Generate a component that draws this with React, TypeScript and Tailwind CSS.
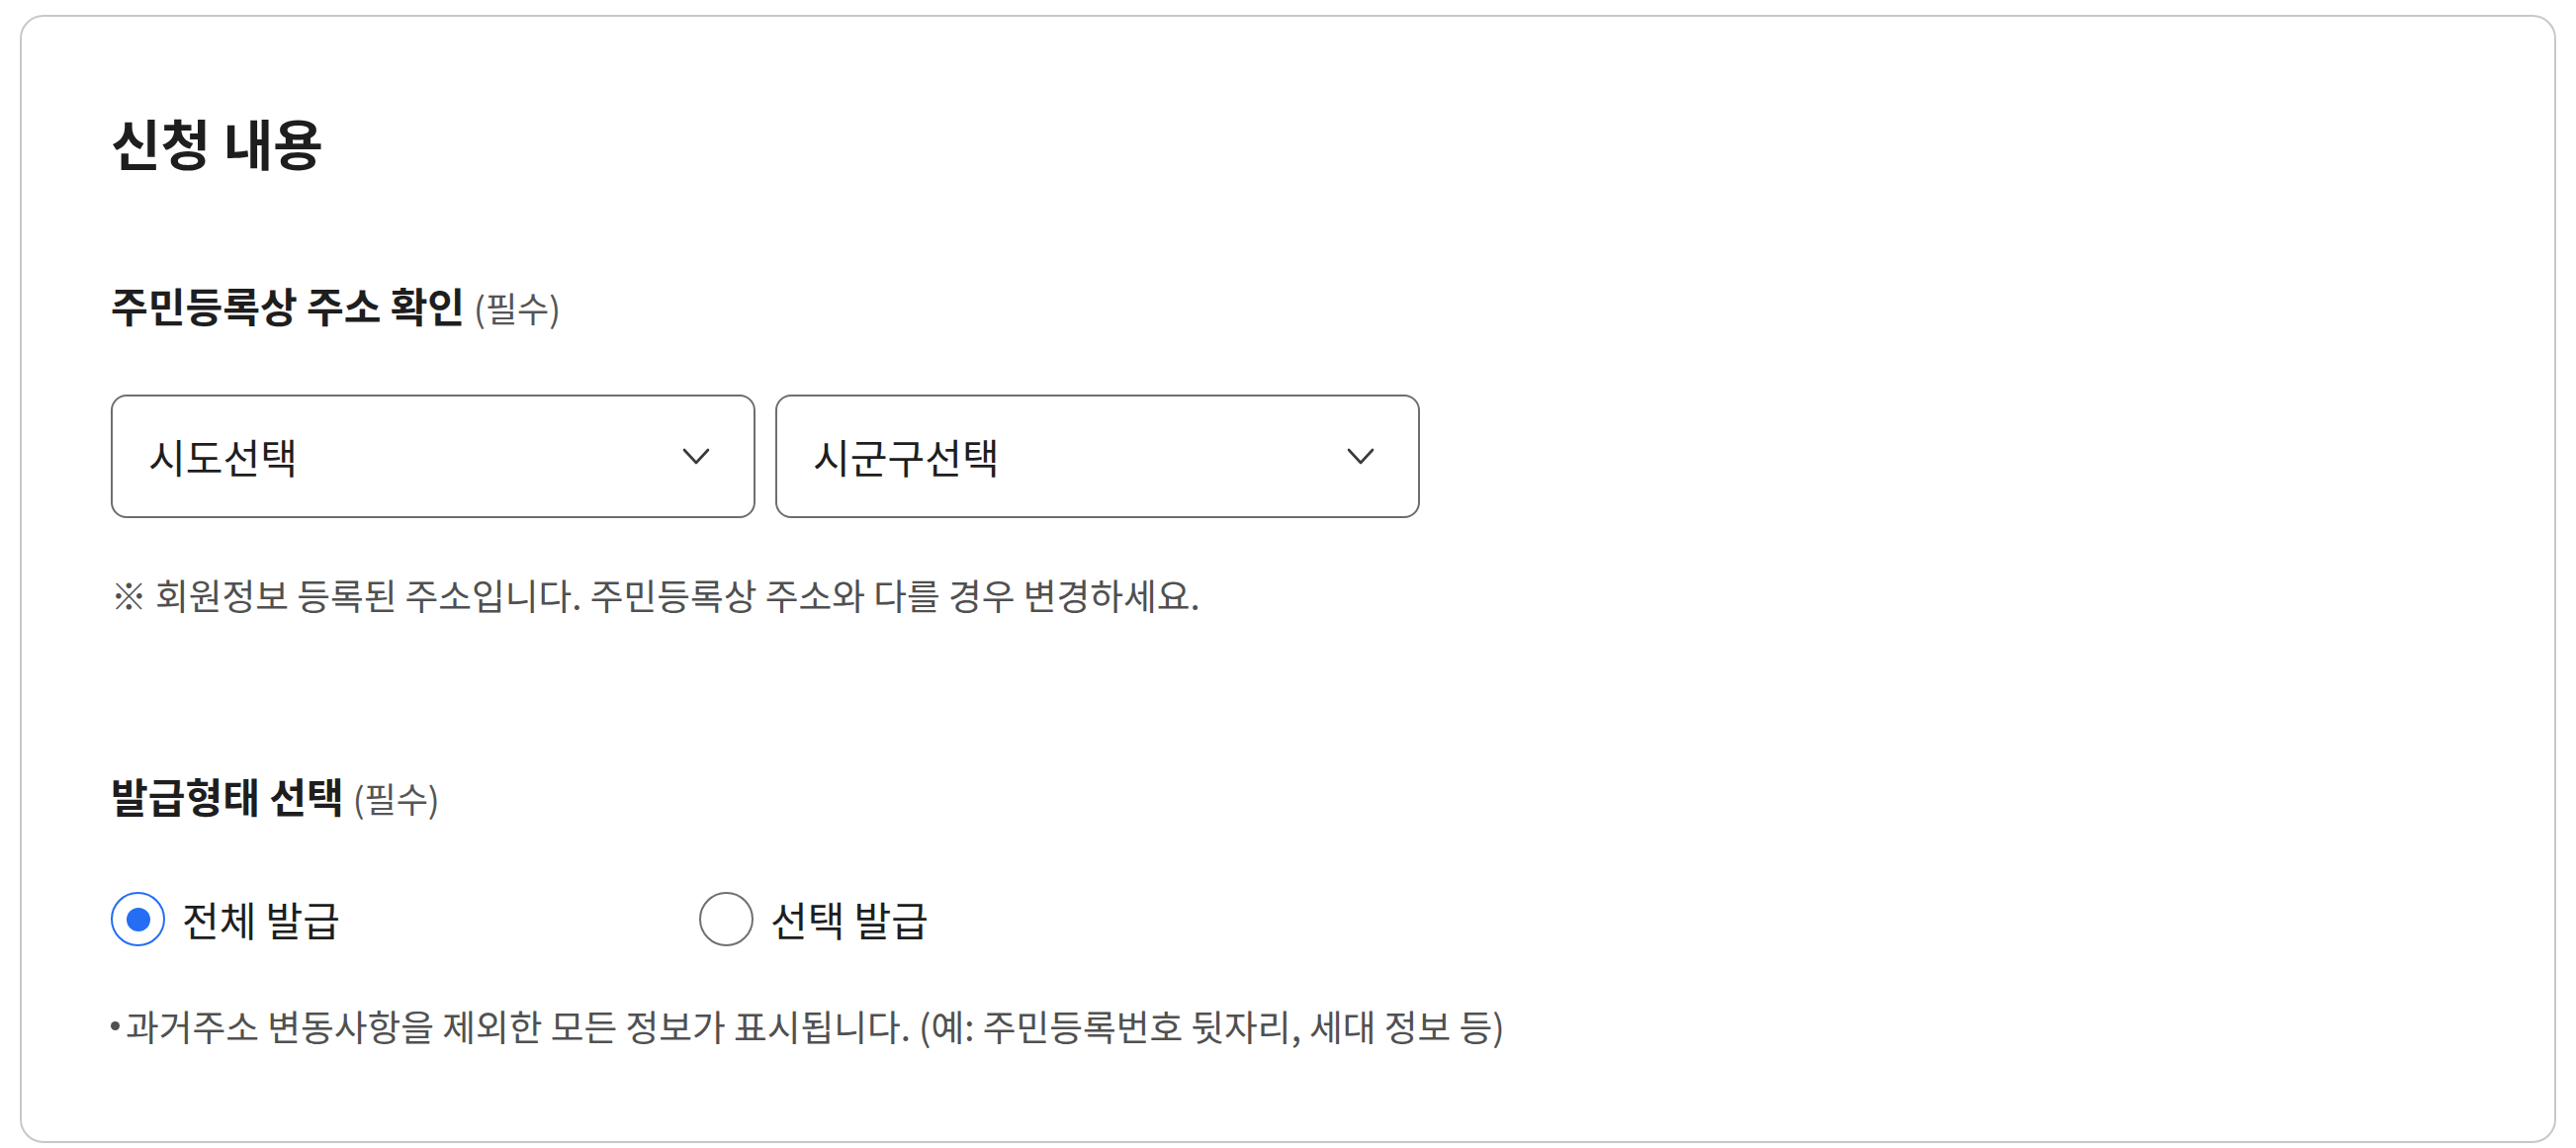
import React from "react";

function Chevron() {
  return (
    <svg width="30" height="22" viewBox="0 0 30 22" fill="none" className="shrink-0">
      <path d="M3 4 L15 17 L27 4" stroke="#3a3a3a" strokeWidth="2.6" strokeLinecap="round" strokeLinejoin="round" />
    </svg>
  );
}

function Select({ label }: { label: string }) {
  return (
    <div className="w-[652px] h-[125px] border-2 border-[#6e6e6e] rounded-[16px] flex items-center justify-between pl-[36px] pr-[43px] bg-white">
      <span className="text-[41px] text-[#1e1e1e] leading-none">{label}</span>
      <Chevron />
    </div>
  );
}

function Radio({ checked, label }: { checked: boolean; label: string }) {
  return (
    <div className="w-[595px] flex items-center gap-[17px]">
      <div
        className={
          checked
            ? "w-[55px] h-[55px] rounded-full border-2 border-[#256ef4] flex items-center justify-center"
            : "w-[55px] h-[55px] rounded-full border-2 border-[#707070]"
        }
      >
        {checked && <div className="w-[24px] h-[24px] rounded-full bg-[#256ef4]" />}
      </div>
      <span className="text-[41px] text-[#1e1e1e] leading-none">{label}</span>
    </div>
  );
}

export default function App() {
  return (
    <div
      className="min-h-screen bg-white pt-[15px] px-[20px]"
      style={{ fontFamily: '"Noto Sans CJK KR", "Noto Sans", sans-serif' }}
    >
      <div className="border-2 border-[#c8c8c8] rounded-[24px] pt-[85px] pb-[89px] px-[90px]">
        <h1 className="text-[55px] font-bold text-[#1e1e1e] leading-[82px]">신청 내용</h1>

        <div className="mt-[93px] flex items-baseline leading-[63px]">
          <span className="text-[41px] font-bold text-[#1e1e1e]">주민등록상 주소 확인</span>
          <span className="ml-[9px] text-[35px] text-[#555555]">(필수)</span>
        </div>

        <div className="mt-[57px] flex gap-[20px]">
          <Select label="시도선택" />
          <Select label="시군구선택" />
        </div>

        <p className="mt-[50px] text-[36.7px] text-[#505050] leading-[55px]">
          ※ 회원정보 등록된 주소입니다. 주민등록상 주소와 다를 경우 변경하세요.
        </p>

        <div className="mt-[144px] flex items-baseline leading-[63px]">
          <span className="text-[41px] font-bold text-[#1e1e1e]">발급형태 선택</span>
          <span className="ml-[9px] text-[35px] text-[#555555]">(필수)</span>
        </div>

        <div className="mt-[64px] flex">
          <Radio checked label="전체 발급" />
          <Radio checked={false} label="선택 발급" />
        </div>

        <div className="mt-[53px] flex items-start text-[36.7px] text-[#505050] leading-[55px]">
          <span className="mt-[23px] mr-[6px] w-[9px] h-[9px] rounded-full bg-[#505050] shrink-0" />
          <span>과거주소 변동사항을 제외한 모든 정보가 표시됩니다. (예: 주민등록번호 뒷자리, 세대 정보 등)</span>
        </div>
      </div>
    </div>
  );
}
